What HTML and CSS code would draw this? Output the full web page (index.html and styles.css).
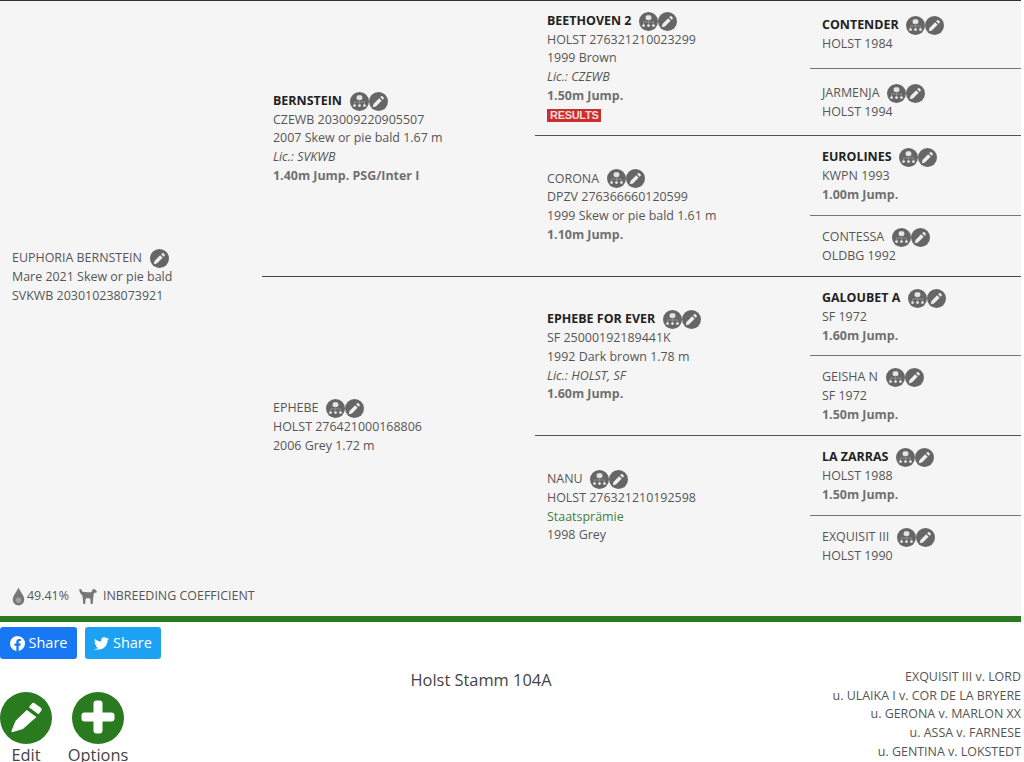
FILE: index.html
```html
<!DOCTYPE html>
<html lang="en">
<head>
<meta charset="utf-8">
<title>Euphoria Bernstein</title>
<link rel="stylesheet" href="styles.css">
</head>
<body>
<svg class="defs" width="0" height="0">
  <symbol id="tree" viewBox="0 0 20 20">
    <circle cx="10" cy="10" r="10" fill="#666"/>
    <rect x="7" y="3.500" width="6" height="4.800" rx="1.800" fill="#e4e4e4"/>
    <path d="M10 8v4.500M4.800 12.800v-2.300h10.400v2.300" stroke="#999" stroke-width=".8" fill="none"/>
    <circle cx="4.800" cy="14.300" r="1.500" fill="#e4e4e4"/>
    <circle cx="10" cy="14.300" r="1.500" fill="#e4e4e4"/>
    <circle cx="15.200" cy="14.300" r="1.500" fill="#e4e4e4"/>
  </symbol>
  <symbol id="pen" viewBox="0 0 20 20">
    <circle cx="10" cy="10" r="10" fill="#666"/>
    <path d="M12.800 4.600a1 1 0 0 1 1.400 0l1.200 1.200a1 1 0 0 1 0 1.400l-1 1-2.600-2.600zM10.700 6.700l2.600 2.600-6 6-3.300.7.700-3.300z" fill="#eee"/>
  </symbol>
</svg>

<main class="sheet">
  <div class="pedigree">
    <div class="cell subject">
      <div class="name plain">EUPHORIA BERNSTEIN <svg class="ico first"><use href="#pen"/></svg></div>
      <div>Mare 2021 Skew or pie bald</div>
      <div>SVKWB 203010238073921</div>
    </div>

    <div class="cell sire">
      <div class="name">BERNSTEIN <svg class="ico first"><use href="#tree"/></svg><svg class="ico"><use href="#pen"/></svg></div>
      <div>CZEWB 203009220905507</div>
      <div>2007 Skew or pie bald 1.67 m</div>
      <div class="lic">Lic.: SVKWB</div>
      <div class="perf">1.40m Jump. PSG/Inter I</div>
    </div>
    <div class="cell dam">
      <div class="name plain">EPHEBE <svg class="ico first"><use href="#tree"/></svg><svg class="ico"><use href="#pen"/></svg></div>
      <div>HOLST 276421000168806</div>
      <div>2006 Grey 1.72 m</div>
    </div>

    <div class="cell g1 low">
      <div class="name">BEETHOVEN 2 <svg class="ico first"><use href="#tree"/></svg><svg class="ico"><use href="#pen"/></svg></div>
      <div>HOLST 276321210023299</div>
      <div>1999 Brown</div>
      <div class="lic">Lic.: CZEWB</div>
      <div class="perf">1.50m Jump.</div>
      <div class="results-row"><span class="results">RESULTS</span></div>
    </div>
    <div class="cell g2 rule low">
      <div class="name plain">CORONA <svg class="ico first"><use href="#tree"/></svg><svg class="ico"><use href="#pen"/></svg></div>
      <div>DPZV 276366660120599</div>
      <div>1999 Skew or pie bald 1.61 m</div>
      <div class="perf">1.10m Jump.</div>
    </div>
    <div class="cell g3 low">
      <div class="name">EPHEBE FOR EVER <svg class="ico first"><use href="#tree"/></svg><svg class="ico"><use href="#pen"/></svg></div>
      <div>SF 25000192189441K</div>
      <div>1992 Dark brown 1.78 m</div>
      <div class="lic">Lic.: HOLST, SF</div>
      <div class="perf">1.60m Jump.</div>
    </div>
    <div class="cell g4 rule low">
      <div class="name plain">NANU <svg class="ico first"><use href="#tree"/></svg><svg class="ico"><use href="#pen"/></svg></div>
      <div>HOLST 276321210192598</div>
      <div class="award">Staatsprämie</div>
      <div>1998 Grey</div>
    </div>

    <div class="cell r1">
      <div class="name">CONTENDER <svg class="ico first"><use href="#tree"/></svg><svg class="ico"><use href="#pen"/></svg></div>
      <div>HOLST 1984</div>
    </div>
    <div class="cell r2 soft low">
      <div class="name plain">JARMENJA <svg class="ico first"><use href="#tree"/></svg><svg class="ico"><use href="#pen"/></svg></div>
      <div>HOLST 1994</div>
    </div>
    <div class="cell r3 rule low">
      <div class="name">EUROLINES <svg class="ico first"><use href="#tree"/></svg><svg class="ico"><use href="#pen"/></svg></div>
      <div>KWPN 1993</div>
      <div class="perf">1.00m Jump.</div>
    </div>
    <div class="cell r4 soft low">
      <div class="name plain">CONTESSA <svg class="ico first"><use href="#tree"/></svg><svg class="ico"><use href="#pen"/></svg></div>
      <div>OLDBG 1992</div>
    </div>
    <div class="cell r5 low">
      <div class="name">GALOUBET A <svg class="ico first"><use href="#tree"/></svg><svg class="ico"><use href="#pen"/></svg></div>
      <div>SF 1972</div>
      <div class="perf">1.60m Jump.</div>
    </div>
    <div class="cell r6 soft low">
      <div class="name plain">GEISHA N <svg class="ico first"><use href="#tree"/></svg><svg class="ico"><use href="#pen"/></svg></div>
      <div>SF 1972</div>
      <div class="perf">1.50m Jump.</div>
    </div>
    <div class="cell r7 rule low">
      <div class="name">LA ZARRAS <svg class="ico first"><use href="#tree"/></svg><svg class="ico"><use href="#pen"/></svg></div>
      <div>HOLST 1988</div>
      <div class="perf">1.50m Jump.</div>
    </div>
    <div class="cell r8 soft">
      <div class="name plain">EXQUISIT III <svg class="ico first"><use href="#tree"/></svg><svg class="ico"><use href="#pen"/></svg></div>
      <div>HOLST 1990</div>
    </div>
  </div>

  <div class="inbreeding">
    <svg class="drop" viewBox="0 0 14 20"><path d="M7 0C5.500 5 .8 8.500.8 13.300A6.200 6.500 0 0 0 13.200 13.300C13.200 8.500 8.500 5 7 0z" fill="#777"/><circle cx="7" cy="14" r="3" fill="#a0a0a0"/></svg>
    <span class="pct">49.41%</span>
    <svg class="horse" viewBox="0 0 18 16"><path d="M0 1.500L2 1l1.500 2.800c2.500.6 6.300.6 9 .2l1.300-3.200.9 1 .8-1.200.8 1.200 1.700 2-1 1.200-1.500-.4-1 2.500-.3 3.300-.5 5.500h-2l-.3-4.600-.8-1H7.300l-.8 1-.3 4.600h-2l-.4-5.200L3.400 7.400C1.800 6.800.8 4 0 1.500z" fill="#777"/></svg>
    <span>INBREEDING COEFFICIENT</span>
  </div>
</main>

<section class="below">
  <div class="shares">
    <a class="share fb"><svg class="share-ico" viewBox="0 0 16 16"><path d="M16 8a8 8 0 1 0-9.250 7.900v-5.600H4.700V8h2.050V6.240c0-2 1.200-3.120 3.020-3.120.88 0 1.800.16 1.800.16v1.970h-1c-1 0-1.300.62-1.300 1.250V8h2.220l-.36 2.300H9.270v5.600A8 8 0 0 0 16 8z" fill="#fff"/></svg>Share</a>
    <a class="share tw"><svg class="share-ico" viewBox="0 0 16 16"><path d="M5 14.500c6 0 9.400-5 9.400-9.400v-.4c.6-.5 1.200-1.100 1.600-1.700-.6.300-1.200.4-1.900.5.700-.4 1.200-1 1.400-1.800-.6.400-1.300.6-2.100.8a3.300 3.300 0 0 0-5.700 3C5 6.300 2.600 5 1.100 3 .2 4.500.7 6.400 2.100 7.400c-.5 0-1-.2-1.500-.4 0 1.600 1.100 2.900 2.700 3.200-.5.100-1 .2-1.500.1.400 1.300 1.600 2.300 3.100 2.300C3.500 13.700 1.800 14.200 0 14c1.500.9 3.200.5 5 .5z" fill="#fff"/></svg>Share</a>
  </div>
  <div class="bottom">
    <div class="actions">
      <div class="action">
        <span class="round"><svg viewBox="0 0 52 52"><path d="M31.500 12a2.500 2.500 0 0 1 3.500-.6l5.500 4a2.500 2.500 0 0 1 .6 3.500l-2.600 3.400-9.600-7zM26.800 18.100l9.600 7-13.500 12-10 3c-1.100.3-1.700-.5-1.300-1.500l4-9.800z" fill="#fff"/></svg></span>
        <span class="label">Edit</span>
      </div>
      <div class="action">
        <span class="round"><svg viewBox="0 0 52 52"><rect x="9.500" y="20.500" width="33" height="9" rx="3" fill="#fff"/><rect x="21.500" y="8.500" width="9" height="33" rx="3" fill="#fff"/></svg></span>
        <span class="label">Options</span>
      </div>
    </div>
    <div class="stamm">Holst Stamm 104A</div>
    <div class="dams">
      <div>EXQUISIT III v. LORD</div>
      <div>u. ULAIKA I v. COR DE LA BRYERE</div>
      <div>u. GERONA v. MARLON XX</div>
      <div>u. ASSA v. FARNESE</div>
      <div>u. GENTINA v. LOKSTEDT</div>
    </div>
  </div>
</section>
</body>
</html>
```
FILE: styles.css
```css
html, body { margin: 0; padding: 0; }
body {
  width: 1024px;
  height: 762px;
  overflow: hidden;
  background: #fff;
  color: #555;
  font-family: "Open Sans", "Liberation Sans", sans-serif;
  font-size: 12.450px;
  line-height: 18.700px;
}
.defs { display: block; height: 0; }
.sheet {
  width: 1021px;
  height: 616px;
  background: #f5f5f5;
  border-bottom: 6px solid #2a7a1f;
  display: flex;
  flex-direction: column;
}
.pedigree {
  display: grid;
  grid-template-columns: 262px 273px 275px 211px;
  grid-template-rows: 67px 67px 80px 61px 79px 80px 80px 62px;
  border-top: 1px solid #333;
  height: 577px;
  box-sizing: border-box;
}
.cell {
  display: flex;
  flex-direction: column;
  justify-content: center;
  padding-left: 12px;
  min-width: 0;
  white-space: nowrap;
}
.low { padding-top: 2px; }
.subject { grid-column: 1; grid-row: 1 / 9; padding-bottom: 24px; }
.sire { grid-column: 2; grid-row: 1 / 5; padding-left: 11px; }
.dam { grid-column: 2; grid-row: 5 / 9; border-top: 1px solid #444; padding-left: 11px; }
.g1 { grid-column: 3; grid-row: 1 / 3; }
.g2 { grid-column: 3; grid-row: 3 / 5; }
.g3 { grid-column: 3; grid-row: 5 / 7; border-top: 1px solid #444; }
.g4 { grid-column: 3; grid-row: 7 / 9; }
.r1 { grid-column: 4; grid-row: 1; }
.r2 { grid-column: 4; grid-row: 2; }
.r3 { grid-column: 4; grid-row: 3; }
.r4 { grid-column: 4; grid-row: 4; }
.r5 { grid-column: 4; grid-row: 5; border-top: 1px solid #444; }
.r6 { grid-column: 4; grid-row: 6; }
.r7 { grid-column: 4; grid-row: 7; }
.r8 { grid-column: 4; grid-row: 8; }
.rule { border-top: 1px solid #555; }
.soft { border-top: 1px solid #777; }
.name {
  display: flex;
  align-items: center;
  font-weight: 700;
  color: #222;
  white-space: pre;
}
.name.plain { font-weight: 400; color: #555; }
.ico { width: 19px; height: 19px; flex: none; }
.ico.first { margin-left: 4.500px; }
.lic { font-style: italic; }
.perf { font-weight: 700; color: #707070; }
.award { color: #44803f; }
.results-row { display: flex; align-items: center; height: 21px; }
.results {
  background: #c9302c;
  color: #f5dada;
  font-family: "Liberation Sans", sans-serif;
  font-weight: 700;
  font-size: 11px;
  line-height: 13px;
  padding: 0 3px;
  letter-spacing: -.3px;
}
.inbreeding {
  display: flex;
  align-items: center;
  height: 38px;
  padding-left: 12px;
}
.drop { width: 13px; height: 19px; margin-right: 2px; }
.pct { margin-right: 10px; }
.horse { width: 18px; height: 16px; margin-right: 6px; }
.below { width: 1021px; }
.shares { display: flex; gap: 8px; padding-top: 5px; }
.share {
  display: flex;
  align-items: center;
  gap: 4px;
  height: 32px;
  padding: 0 9.500px;
  border-radius: 3px;
  color: #fff;
  font-size: 14.500px;
}
.fb { background: #1877f2; }
.tw { background: #1da1f2; padding: 0 9px; }
.share-ico { width: 15px; height: 15px; }
.bottom { display: flex; }
.actions { display: flex; gap: 20px; padding-top: 33px; }
.action { display: flex; flex-direction: column; align-items: center; width: 52px; }
.round {
  width: 52px;
  height: 52px;
  border-radius: 50%;
  background: #2a7a1f;
  display: block;
}
.round svg { display: block; width: 52px; height: 52px; }
.label { font-size: 16.400px; line-height: 22px; color: #444; white-space: nowrap; }
.stamm {
  flex: 1;
  text-align: center;
  font-size: 16.400px;
  line-height: 24px;
  color: #444;
  padding-top: 9px;
  padding-left: 17px;
}
.dams { text-align: right; padding-top: 9px; white-space: nowrap; width: 200px; }
```
